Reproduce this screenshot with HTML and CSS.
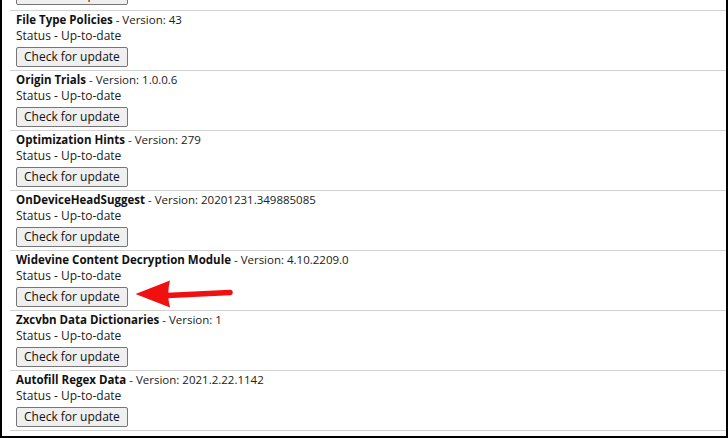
FILE: index.html
```html
<!DOCTYPE html>
<html>
<head>
<meta charset="utf-8">
<link rel="stylesheet" href="styles.css">
</head>
<body>
<div class="frame">
  <div class="list">
    <div class="row stub">
      <button class="btn">Check for update</button>
    </div>
    <div class="row">
      <div class="title"><b>File Type Policies</b> - Version: 43</div>
      <div class="status">Status - Up-to-date</div>
      <div class="actions"><button class="btn">Check for update</button></div>
    </div>
    <div class="row">
      <div class="title"><b>Origin Trials</b> - Version: 1.0.0.6</div>
      <div class="status">Status - Up-to-date</div>
      <div class="actions"><button class="btn">Check for update</button></div>
    </div>
    <div class="row">
      <div class="title"><b>Optimization Hints</b> - Version: 279</div>
      <div class="status">Status - Up-to-date</div>
      <div class="actions"><button class="btn">Check for update</button></div>
    </div>
    <div class="row">
      <div class="title"><b>OnDeviceHeadSuggest</b> - Version: 20201231.349885085</div>
      <div class="status">Status - Up-to-date</div>
      <div class="actions"><button class="btn">Check for update</button></div>
    </div>
    <div class="row">
      <div class="title"><b>Widevine Content Decryption Module</b> - Version: 4.10.2209.0</div>
      <div class="status">Status - Up-to-date</div>
      <div class="actions">
        <button class="btn">Check for update</button>
        <svg class="arrow" width="100" height="30" viewBox="0 0 100 30">
          <line x1="33" y1="16.5" x2="96" y2="13.5" stroke="#f01010" stroke-width="5.5" stroke-linecap="round"/>
          <path d="M1.5 15 L36 1.5 Q32.5 15 36 28.5 Z" fill="#f01010"/>
        </svg>
      </div>
    </div>
    <div class="row">
      <div class="title"><b>Zxcvbn Data Dictionaries</b> - Version: 1</div>
      <div class="status">Status - Up-to-date</div>
      <div class="actions"><button class="btn">Check for update</button></div>
    </div>
    <div class="row">
      <div class="title"><b>Autofill Regex Data</b> - Version: 2021.2.22.1142</div>
      <div class="status">Status - Up-to-date</div>
      <div class="actions"><button class="btn">Check for update</button></div>
    </div>
  </div>
</div>
</body>
</html>
```
FILE: styles.css
```css
html, body {
  margin: 0;
  padding: 0;
  background: #ffffff;
}
.frame {
  box-sizing: border-box;
  width: 728px;
  height: 438px;
  border-left: 2px solid #000;
  border-right: 2px solid #000;
  border-bottom: 2px solid #000;
  overflow: hidden;
  font-family: "Open Sans", "Noto Sans", sans-serif;
  font-size: 12px;
  color: #202020;
}
.list {
  display: flex;
  flex-direction: column;
  margin-left: 8px;
}
.row {
  padding: 1px 0 3px 6px;
  border-bottom: 1px solid #d2d2d2;
  display: flex;
  flex-direction: column;
  align-items: flex-start;
}
.row.stub {
  margin-top: -15px;
  padding-top: 0;
  padding-bottom: 5px;
}
.title, .status {
  line-height: 16px;
  height: 16px;
  white-space: nowrap;
}
.title {
  font-size: 11.5px;
}
.title b {
  font-weight: 700;
  color: #111;
}
.actions {
  position: relative;
  display: flex;
  align-items: center;
  margin-top: 3px;
}
.btn {
  box-sizing: border-box;
  height: 20px;
  padding: 0 7px;
  font-family: inherit;
  font-size: 12px;
  line-height: 18px;
  color: #111;
  background: #efefef;
  border: 1px solid #767676;
  border-radius: 2px;
  margin: 0;
}
.arrow {
  position: absolute;
  left: 118px;
  top: -8px;
}
```
